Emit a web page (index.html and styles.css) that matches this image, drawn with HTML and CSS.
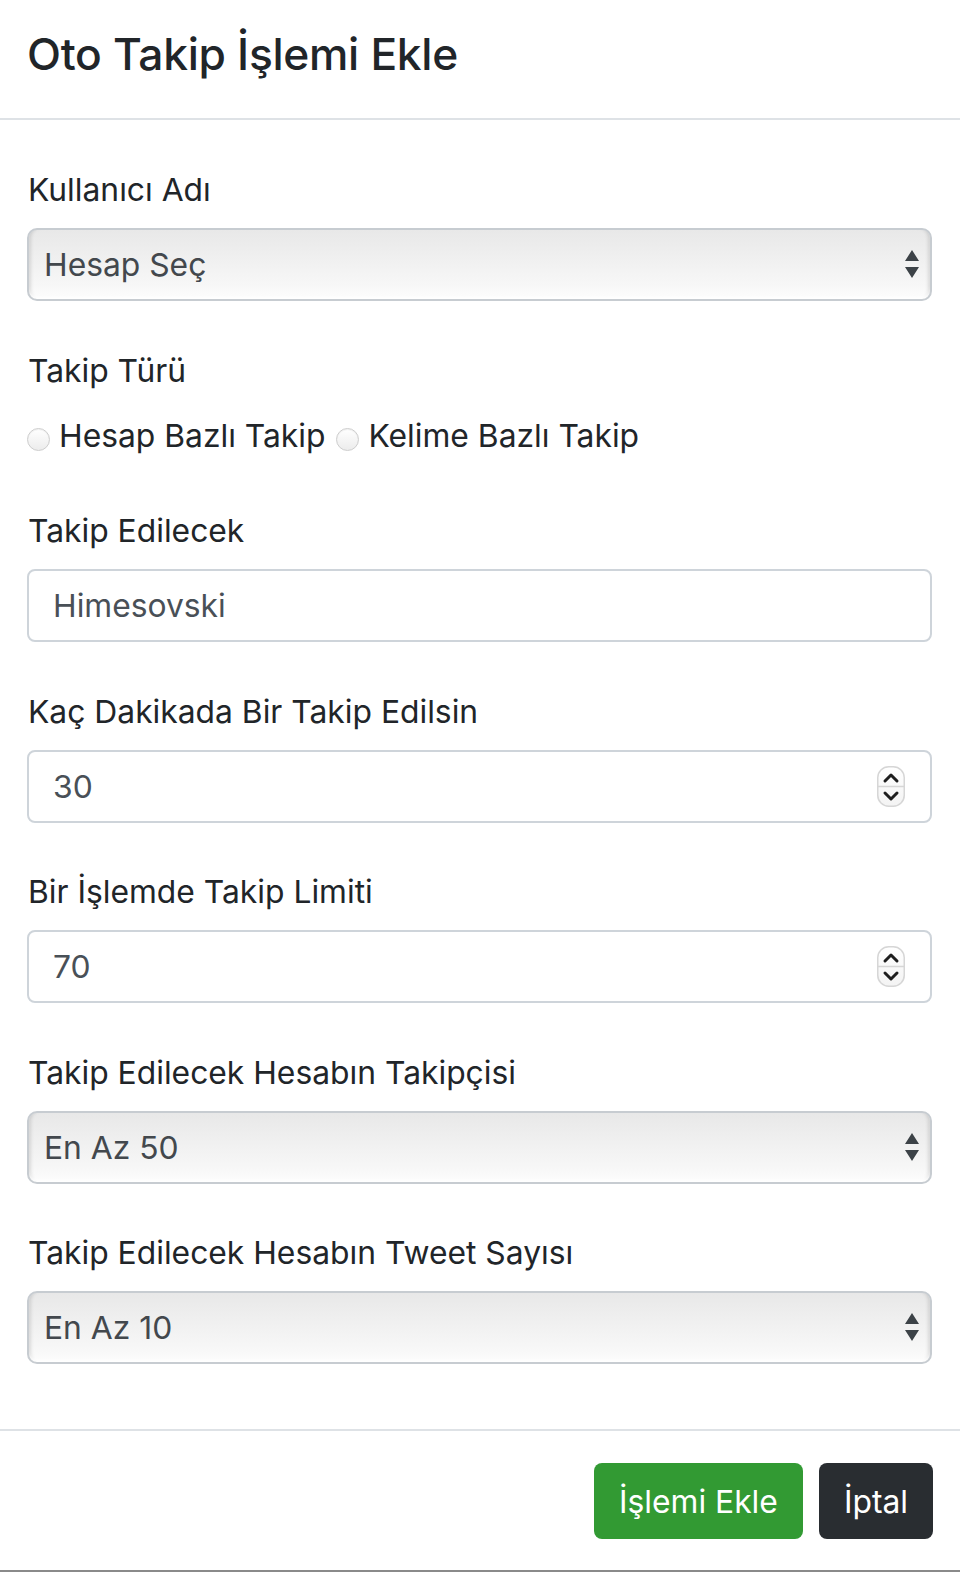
FILE: index.html
```html
<!DOCTYPE html>
<html lang="tr">
<head>
<meta charset="utf-8">
<title>Oto Takip İşlemi Ekle</title>
<link rel="stylesheet" href="styles.css">
</head>
<body>
<div class="modal">
  <div class="modal-header">
    <h3 class="modal-title">Oto Takip İşlemi Ekle</h3>
  </div>
  <div class="modal-body">
    <div class="form-group">
      <label class="label">Kullanıcı Adı</label>
      <div class="select"><span>Hesap Seç</span>
        <svg class="sel-arrow" width="14" height="30" viewBox="0 0 14 30"><path d="M0 11 L7 0 L14 11 Z M0 17 L14 17 L7 28 Z" fill="#3c4247"/></svg>
      </div>
    </div>
    <div class="form-group radio-group">
      <label class="label">Takip Türü</label>
      <div class="radio-row">
        <span class="radio"></span><span class="radio-text">Hesap Bazlı Takip</span>
        <span class="radio second"></span><span class="radio-text">Kelime Bazlı Takip</span>
      </div>
    </div>
    <div class="form-group">
      <label class="label">Takip Edilecek</label>
      <div class="input"><span>Himesovski</span></div>
    </div>
    <div class="form-group">
      <label class="label">Kaç Dakikada Bir Takip Edilsin</label>
      <div class="input"><span>30</span>
        <svg class="spin" width="28" height="41" viewBox="0 0 28 41"><defs><linearGradient id="sg" x1="0" y1="0" x2="0" y2="1"><stop offset="0" stop-color="#fff"/><stop offset="1" stop-color="#f3f3f3"/></linearGradient></defs><rect x="0.75" y="0.75" width="26.5" height="39.5" rx="11" fill="url(#sg)" stroke="#d6d6d6" stroke-width="1.5"/><line x1="1" y1="20.5" x2="27" y2="20.5" stroke="#d6d6d6" stroke-width="1.5"/><path d="M8 15 L14 9 L20 15" fill="none" stroke="#1e1e1e" stroke-width="3" stroke-linecap="round" stroke-linejoin="round"/><path d="M8 27 L14 33 L20 27" fill="none" stroke="#1e1e1e" stroke-width="3" stroke-linecap="round" stroke-linejoin="round"/></svg>
      </div>
    </div>
    <div class="form-group">
      <label class="label">Bir İşlemde Takip Limiti</label>
      <div class="input"><span>70</span>
        <svg class="spin" width="28" height="41" viewBox="0 0 28 41"><rect x="0.75" y="0.75" width="26.5" height="39.5" rx="11" fill="url(#sg)" stroke="#d6d6d6" stroke-width="1.5"/><line x1="1" y1="20.5" x2="27" y2="20.5" stroke="#d6d6d6" stroke-width="1.5"/><path d="M8 15 L14 9 L20 15" fill="none" stroke="#1e1e1e" stroke-width="3" stroke-linecap="round" stroke-linejoin="round"/><path d="M8 27 L14 33 L20 27" fill="none" stroke="#1e1e1e" stroke-width="3" stroke-linecap="round" stroke-linejoin="round"/></svg>
      </div>
    </div>
    <div class="form-group">
      <label class="label">Takip Edilecek Hesabın Takipçisi</label>
      <div class="select"><span>En Az 50</span>
        <svg class="sel-arrow" width="14" height="30" viewBox="0 0 14 30"><path d="M0 11 L7 0 L14 11 Z M0 17 L14 17 L7 28 Z" fill="#3c4247"/></svg>
      </div>
    </div>
    <div class="form-group">
      <label class="label">Takip Edilecek Hesabın Tweet Sayısı</label>
      <div class="select"><span>En Az 10</span>
        <svg class="sel-arrow" width="14" height="30" viewBox="0 0 14 30"><path d="M0 11 L7 0 L14 11 Z M0 17 L14 17 L7 28 Z" fill="#3c4247"/></svg>
      </div>
    </div>
  </div>
  <div class="modal-footer">
    <button class="btn btn-success">İşlemi Ekle</button>
    <button class="btn btn-dark">İptal</button>
  </div>
</div>
</body>
</html>
```

FILE: styles.css
```css
* { box-sizing: border-box; }
html, body { margin: 0; background: #fff; }
body {
  font-family: Inter, "Noto Sans", "Liberation Sans", sans-serif;
  color: #212529;
}
.modal {
  width: 960px;
  border-bottom: 2px solid #8a8a8a;
}
.modal-header {
  height: 120px;
  border-bottom: 2px solid #dee2e6;
  padding: 25px 28px 0 27px;
}
.modal-title {
  margin: 0;
  font-size: 44.3px;
  font-weight: 500;
  line-height: 58px;
  letter-spacing: -0.3px;
}
.modal-body {
  height: 1309px;
  padding: 49px 28px 0 27px;
}
.form-group {
  margin-bottom: 48.5px;
}
.label {
  display: block;
  font-size: 31.8px;
  line-height: 42px;
  margin-bottom: 17px;
  padding-left: 1px;
}
.select {
  height: 73px;
  border: 2px solid #c7ccd1;
  border-radius: 10px;
  display: flex;
  align-items: center;
  justify-content: space-between;
  padding: 0 11px 0 15px;
  background: linear-gradient(#e8e8e8, #f7f7f7 80%, #fdfdfd);
  box-shadow: inset 0 -3px 3px -1px #fff, inset 5px 0 4px -4px rgba(0,0,0,.18), inset -5px 0 4px -4px rgba(0,0,0,.18);
  color: #43484d;
  font-size: 31.8px;
}
.sel-arrow { display: block; margin-top: 1px; }
.input {
  height: 73px;
  border: 2px solid #ced4da;
  border-radius: 8px;
  display: flex;
  align-items: center;
  justify-content: space-between;
  padding: 0 25px 0 24px;
  color: #495057;
  font-size: 31.8px;
  background: #fff;
}
.spin { display: block; }
.radio-row {
  height: 53px;
  display: flex;
  align-items: center;
  font-size: 31.8px;
}
.radio {
  width: 23px;
  height: 23px;
  border-radius: 50%;
  border: 1px solid #cdcdcd;
  background: linear-gradient(#ffffff, #ececec);
  box-shadow: inset 0 1px 1px rgba(0,0,0,.06);
  margin-top: 8px;
  margin-right: 9px;
  flex: none;
}
.radio.second { margin-left: 11px; }
.modal-footer {
  border-top: 2px solid #dee2e6;
  padding: 32px 27px 31px;
  display: flex;
  justify-content: flex-end;
  gap: 16px;
}
.btn {
  height: 76px;
  border-radius: 8px;
  padding: 0 25px;
  font-family: inherit;
  font-size: 31.8px;
  color: #fff;
  border: 0;
  display: flex;
  align-items: center;
}
.btn-success { background: #329a33; }
.btn-dark { background: #292d31; }
```
